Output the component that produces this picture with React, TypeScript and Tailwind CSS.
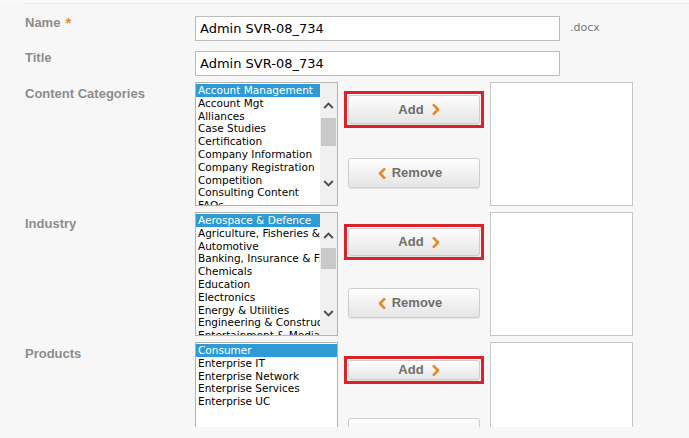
import React from "react";

const LABEL = "font-['Liberation_Sans',Arial,sans-serif] font-bold text-[13px] leading-[15px] text-[#8c8c8c]";
const LISTFONT = "font-['DejaVu_Sans',Verdana,sans-serif] text-[10.5px] leading-[12.8px] text-black";

function ChevronRight() {
  return (
    <svg width="8" height="11" viewBox="0 0 8 11" className="block">
      <polyline points="1.8,1.2 6,5.5 1.8,9.8" fill="none" stroke="#e58a23" strokeWidth="2.6" strokeLinecap="round" strokeLinejoin="round" />
    </svg>
  );
}
function ChevronLeft() {
  return (
    <svg width="8" height="11" viewBox="0 0 8 11" className="block">
      <polyline points="6.2,1.2 2,5.5 6.2,9.8" fill="none" stroke="#e58a23" strokeWidth="2.6" strokeLinecap="round" strokeLinejoin="round" />
    </svg>
  );
}
function ArrowUp() {
  return (
    <svg width="11" height="7" viewBox="0 0 11 7" className="block">
      <polyline points="1.2,6 5.5,1.6 9.8,6" fill="none" stroke="#505050" strokeWidth="2" />
    </svg>
  );
}
function ArrowDown() {
  return (
    <svg width="11" height="7" viewBox="0 0 11 7" className="block">
      <polyline points="1.2,1 5.5,5.4 9.8,1" fill="none" stroke="#505050" strokeWidth="2" />
    </svg>
  );
}

function Scrollbar({ thumb }: { thumb: number }) {
  return (
    <div className="w-[17px] shrink-0 h-full bg-[#f0f0f0] flex flex-col items-center">
      <div className="h-[16px] shrink-0" />
      <div className="h-[12px] shrink-0 flex items-center justify-center"><ArrowUp /></div>
      <div className="h-[7px] shrink-0" />
      <div className="w-[15px] bg-[#c9c9c9] shrink-0" style={{ height: thumb }} />
      <div className="flex-1" />
      <div className="h-[12px] shrink-0 flex items-center justify-center"><ArrowDown /></div>
      <div className="h-[16px] shrink-0" />
    </div>
  );
}

function ListBox({ items, thumb }: { items: string[]; thumb?: number }) {
  return (
    <div className="w-[143px] h-[124px] shrink-0 bg-white border border-[#b3b3b3] flex overflow-hidden">
      <div className={`flex-1 min-w-0 overflow-hidden pt-[1px] ${LISTFONT}`}>
        {items.map((it, i) => (
          <div
            key={it}
            className={`whitespace-nowrap overflow-hidden pl-[2px] h-[12.8px] ${i === 0 ? "bg-[#2e9ad6] text-white" : ""}`}
          >
            {it}
          </div>
        ))}
      </div>
      {thumb !== undefined && <Scrollbar thumb={thumb} />}
    </div>
  );
}

function Btn({ kind, h }: { kind: "add" | "remove"; h: number }) {
  return (
    <div
      className="w-[132px] shrink-0 rounded-[3px] border border-[#cdcdcd] bg-gradient-to-b from-[#fefefe] to-[#e5e5e5] shadow-[0_1px_1px_rgba(0,0,0,0.08)] flex items-center justify-center gap-[8px] font-['Liberation_Sans',Arial,sans-serif] font-bold text-[13px] text-[#6e6e6e]"
      style={{ height: h }}
    >
      {kind === "add" ? (
        <>
          <span className="ml-[10px]">Add</span>
          <ChevronRight />
        </>
      ) : (
        <span className="mr-[8px] flex items-center gap-[6px]"><ChevronLeft /><span>Remove</span></span>
      )}
    </div>
  );
}

function Section({
  label,
  items,
  thumb,
  addTop,
  addH,
  gap,
}: {
  label: string;
  items: string[];
  thumb?: number;
  addTop: number;
  addH: number;
  gap: number;
}) {
  return (
    <div className="flex h-[124px]">
      <div className={`w-[170px] shrink-0 pt-[4px] ${LABEL}`}>{label}</div>
      <ListBox items={items} thumb={thumb} />
      <div className="w-[140px] ml-[6px] shrink-0 flex flex-col" style={{ paddingTop: addTop }}>
        <div className="border-[3px] border-[#d9232b] p-[1px] w-[140px]">
          <Btn kind="add" h={addH} />
        </div>
        <div className="pl-[4px]" style={{ marginTop: gap }}>
          <Btn kind="remove" h={30} />
        </div>
      </div>
      <div className="w-[143px] h-[124px] ml-[6px] shrink-0 bg-white border border-[#c6c6c6]" />
    </div>
  );
}

export default function App() {
  return (
    <div className="w-[689px] h-[438px] bg-[#f7f7f7] overflow-hidden">
      <div className="h-[427px] overflow-hidden">
        <div className="h-[3px] bg-[#fbfbfb]" />
        <div className="ml-[25px] border-t border-[#e8e8e8] pt-[12px]">
          <div className="flex items-start h-[25px]">
            <div className={`w-[170px] shrink-0 -mt-[1px] flex items-start ${LABEL}`}>
              <span>Name</span>
              <span className="ml-[5px] text-[15px] text-[#e0902e]">*</span>
            </div>
            <div className="w-[365px] h-[25px] shrink-0 bg-white border border-[#bcbcbc] flex items-center pl-[4px] font-['DejaVu_Sans',Verdana,sans-serif] text-[13px] text-black">
              Admin SVR-08_734
            </div>
            <div className="ml-[10px] h-[25px] flex items-center font-['DejaVu_Sans',Verdana,sans-serif] text-[11px] text-[#777]">
              .docx
            </div>
          </div>
          <div className="flex items-start h-[25px] mt-[10px]">
            <div className={`w-[170px] shrink-0 -mt-[1px] ${LABEL}`}>Title</div>
            <div className="w-[365px] h-[25px] shrink-0 bg-white border border-[#bcbcbc] flex items-center pl-[4px] font-['DejaVu_Sans',Verdana,sans-serif] text-[13px] text-black">
              Admin SVR-08_734
            </div>
          </div>
          <div className="flex flex-col gap-[6px] mt-[6px]">
            <Section
              label="Content Categories"
              items={[
                "Account Management",
                "Account Mgt",
                "Alliances",
                "Case Studies",
                "Certification",
                "Company Information",
                "Company Registration",
                "Competition",
                "Consulting Content",
                "FAQs",
              ]}
              thumb={28}
              addTop={9}
              addH={29}
              gap={30}
            />
            <Section
              label="Industry"
              items={[
                "Aerospace & Defence",
                "Agriculture, Fisheries & Forestry",
                "Automotive",
                "Banking, Insurance & Finance",
                "Chemicals",
                "Education",
                "Electronics",
                "Energy & Utilities",
                "Engineering & Construction",
                "Entertainment & Media",
              ]}
              thumb={21}
              addTop={12}
              addH={28}
              gap={28}
            />
            <Section
              label="Products"
              items={["Consumer", "Enterprise IT", "Enterprise Network", "Enterprise Services", "Enterprise UC"]}
              addTop={14}
              addH={20}
              gap={34}
            />
          </div>
        </div>
      </div>
    </div>
  );
}
